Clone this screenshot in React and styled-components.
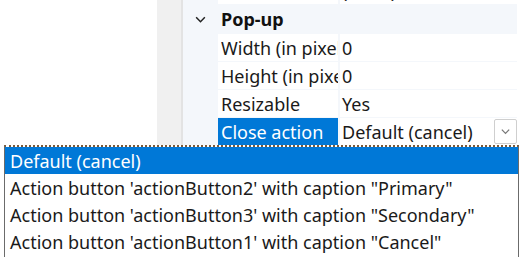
import React from "react";
import styled, { createGlobalStyle } from "styled-components";

const GlobalStyle = createGlobalStyle`
  html, body {
    margin: 0;
    padding: 0;
    background: #ffffff;
    font-family: "Noto Sans", "Open Sans", sans-serif;
    overflow: hidden;
  }
`;

const rows = [
  { label: "Width (in pixels)", value: "0" },
  { label: "Height (in pixels)", value: "0" },
  { label: "Resizable", value: "Yes" },
];

const options = [
  "Default (cancel)",
  "Action button 'actionButton2' with caption \"Primary\"",
  "Action button 'actionButton3' with caption \"Secondary\"",
  "Action button 'actionButton1' with caption \"Cancel\"",
];

function Chevron({ size = 12, color = "#333" }) {
  return (
    <svg width={size} height={size} viewBox="0 0 12 12">
      <path d="M2 4 L6 8 L10 4" fill="none" stroke={color} strokeWidth="1.4" />
    </svg>
  );
}

export default function App() {
  return (
    <Screen>
      <GlobalStyle />
      <Blank />
      <Splitter />
      <Panel>
        <Scroller>
          <Row>
            <Indent />
            <Label />
            <Value>(none)</Value>
          </Row>
          <Header>
            <Indent>
              <Chevron size={13} color="#222" />
            </Indent>
            <HeaderText>Pop-up</HeaderText>
          </Header>
          {rows.map((r) => (
            <Row key={r.label}>
              <Indent />
              <Label>
                <Clip>{r.label}</Clip>
              </Label>
              <Value>{r.value}</Value>
            </Row>
          ))}
          <Row>
            <Indent />
            <Label $active>
              <Clip>Close action</Clip>
            </Label>
            <Value>
              <span>Default (cancel)</span>
              <DropButton>
                <Chevron size={11} color="#777" />
              </DropButton>
            </Value>
          </Row>
        </Scroller>
      </Panel>
      <Menu>
        {options.map((o, i) => (
          <Option key={o} $selected={i === 0}>
            {o}
          </Option>
        ))}
      </Menu>
    </Screen>
  );
}

const Screen = styled.div`
  position: relative;
  display: flex;
  width: 520px;
  height: 257px;
  overflow: hidden;
`;

const Blank = styled.div`
  width: 157px;
  background: #ffffff;
`;

const Splitter = styled.div`
  width: 24px;
  background: #f0f0f0;
  border-right: 2px solid #e3e3e3;
`;

const Panel = styled.div`
  width: 334px;
  background: #f4f7fb;
  overflow: hidden;
`;

const Scroller = styled.div`
  display: flex;
  flex-direction: column;
  gap: 1px;
  margin-top: -23px;
`;

const Row = styled.div`
  display: grid;
  grid-template-columns: 33px 120px 1fr;
  column-gap: 2px;
  height: 27px;
  font-size: 18px;
  color: #1a1a1a;
`;

const Indent = styled.div`
  display: flex;
  align-items: center;
  justify-content: center;
  padding-left: 2px;
`;

const Label = styled.div`
  display: flex;
  align-items: center;
  padding-left: 3px;
  overflow: hidden;
  background: ${(p) => (p.$active ? "#0078d7" : "#ffffff")};
  color: ${(p) => (p.$active ? "#ffffff" : "#1a1a1a")};
`;

const Clip = styled.span`
  display: block;
  overflow: hidden;
  white-space: nowrap;
  max-width: 117px;
`;

const Value = styled.div`
  display: flex;
  align-items: center;
  justify-content: space-between;
  padding-left: 2px;
  background: #ffffff;
  white-space: nowrap;
`;

const Header = styled.div`
  display: grid;
  grid-template-columns: 33px 1fr;
  height: 28px;
  align-items: center;
`;

const HeaderText = styled.div`
  font-size: 18px;
  font-weight: 700;
  color: #111;
  padding-left: 5px;
`;

const DropButton = styled.div`
  display: flex;
  align-items: center;
  justify-content: center;
  width: 21px;
  height: 23px;
  border: 1px solid #cfcfcf;
  border-radius: 2px;
  background: #ffffff;
`;

const Menu = styled.div`
  position: absolute;
  left: 4px;
  top: 145px;
  width: 513px;
  height: 114px;
  border: 1px solid #6b6b6b;
  border-top: 2px dotted #7a5a3a;
  background: #ffffff;
`;

const Option = styled.div`
  height: 27px;
  display: flex;
  align-items: center;
  padding-left: 5px;
  font-size: 18px;
  white-space: nowrap;
  background: ${(p) => (p.$selected ? "#0078d7" : "#ffffff")};
  color: ${(p) => (p.$selected ? "#ffffff" : "#1a1a1a")};
`;
